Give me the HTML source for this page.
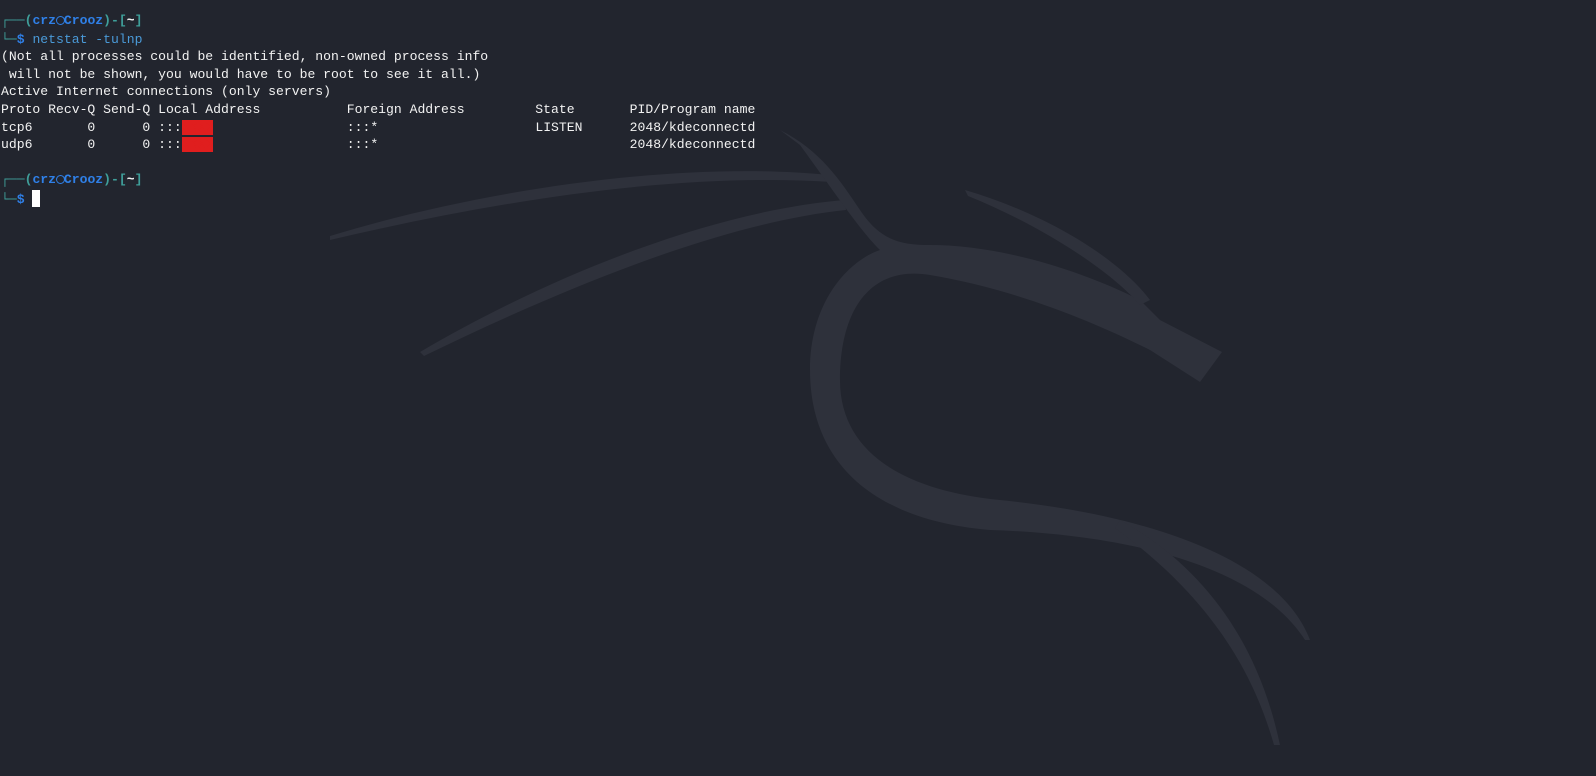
<!DOCTYPE html>
<html><head><meta charset="utf-8">
<style>
html,body{margin:0;padding:0;}
body{width:1596px;height:776px;background:#22252e;overflow:hidden;position:relative;}
svg{position:absolute;left:0;top:0;}
pre{position:absolute;left:1px;top:12px;margin:0;font-family:"Liberation Mono","DejaVu Sans Mono",monospace;font-size:13.1px;line-height:17.6px;color:#f2f2f2;}
.t{color:#3f9f9a;font-weight:bold}
.b{color:#2f80e8;font-weight:bold}
.c{color:#4a9ad8}
.r{background:#e01e1e;color:#e01e1e}
.cur{display:inline-block;width:8px;height:17px;background:#fff;vertical-align:-4px}
.k{display:inline-block;width:7.87px;text-align:center;vertical-align:-1px}
.k i{display:inline-block;width:9px;height:9px;border:1.5px solid #2f80e8;border-radius:50%;box-sizing:border-box}
</style></head><body>
<svg width="1596" height="776" viewBox="0 0 1596 776">
<g fill="#2e313b">
<path d="M330 236 C480 190 680 160 830 175 L832 182 C680 172 500 200 330 240 Z"/>
<path d="M420 352 C560 270 720 210 845 200 L846 210 C730 222 580 280 424 356 Z"/>
<path d="M780 130 C820 150 840 180 860 210 C880 240 900 245 930 245 C1000 245 1080 270 1140 300 L1160 320 L1222 352 L1200 382 L1150 350 C1100 325 1020 290 930 275 C870 265 840 310 840 380 C840 450 900 490 1000 500 C1150 515 1280 560 1310 640 L1305 640 C1260 570 1140 535 990 530 C870 520 810 460 810 370 C810 300 850 260 880 250 C860 230 840 200 800 145 Z"/>
<path d="M965 190 C1050 215 1120 260 1150 300 L1140 305 C1110 270 1040 225 968 196 Z"/>
<path d="M1120 520 C1210 570 1260 650 1280 745 L1274 745 C1250 660 1200 590 1115 528 Z"/>
</g>
</svg>
<pre><span class="t">┌──(</span><span class="b">crz</span><span class="k"><i></i></span><span class="b">Crooz</span><span class="t">)-[</span><span style="font-weight:bold">~</span><span class="t">]</span>
<span class="t">└─</span><span class="b">$</span> <span class="c">netstat -tulnp</span>
(Not all processes could be identified, non-owned process info
 will not be shown, you would have to be root to see it all.)
Active Internet connections (only servers)
Proto Recv-Q Send-Q Local Address           Foreign Address         State       PID/Program name
tcp6       0      0 :::<span class="r">XXXX</span>                 :::*                    LISTEN      2048/kdeconnectd
udp6       0      0 :::<span class="r">XXXX</span>                 :::*                                2048/kdeconnectd

<span class="t">┌──(</span><span class="b">crz</span><span class="k"><i></i></span><span class="b">Crooz</span><span class="t">)-[</span><span style="font-weight:bold">~</span><span class="t">]</span>
<span class="t">└─</span><span class="b">$</span> <span class="cur"></span></pre>
</body></html>
